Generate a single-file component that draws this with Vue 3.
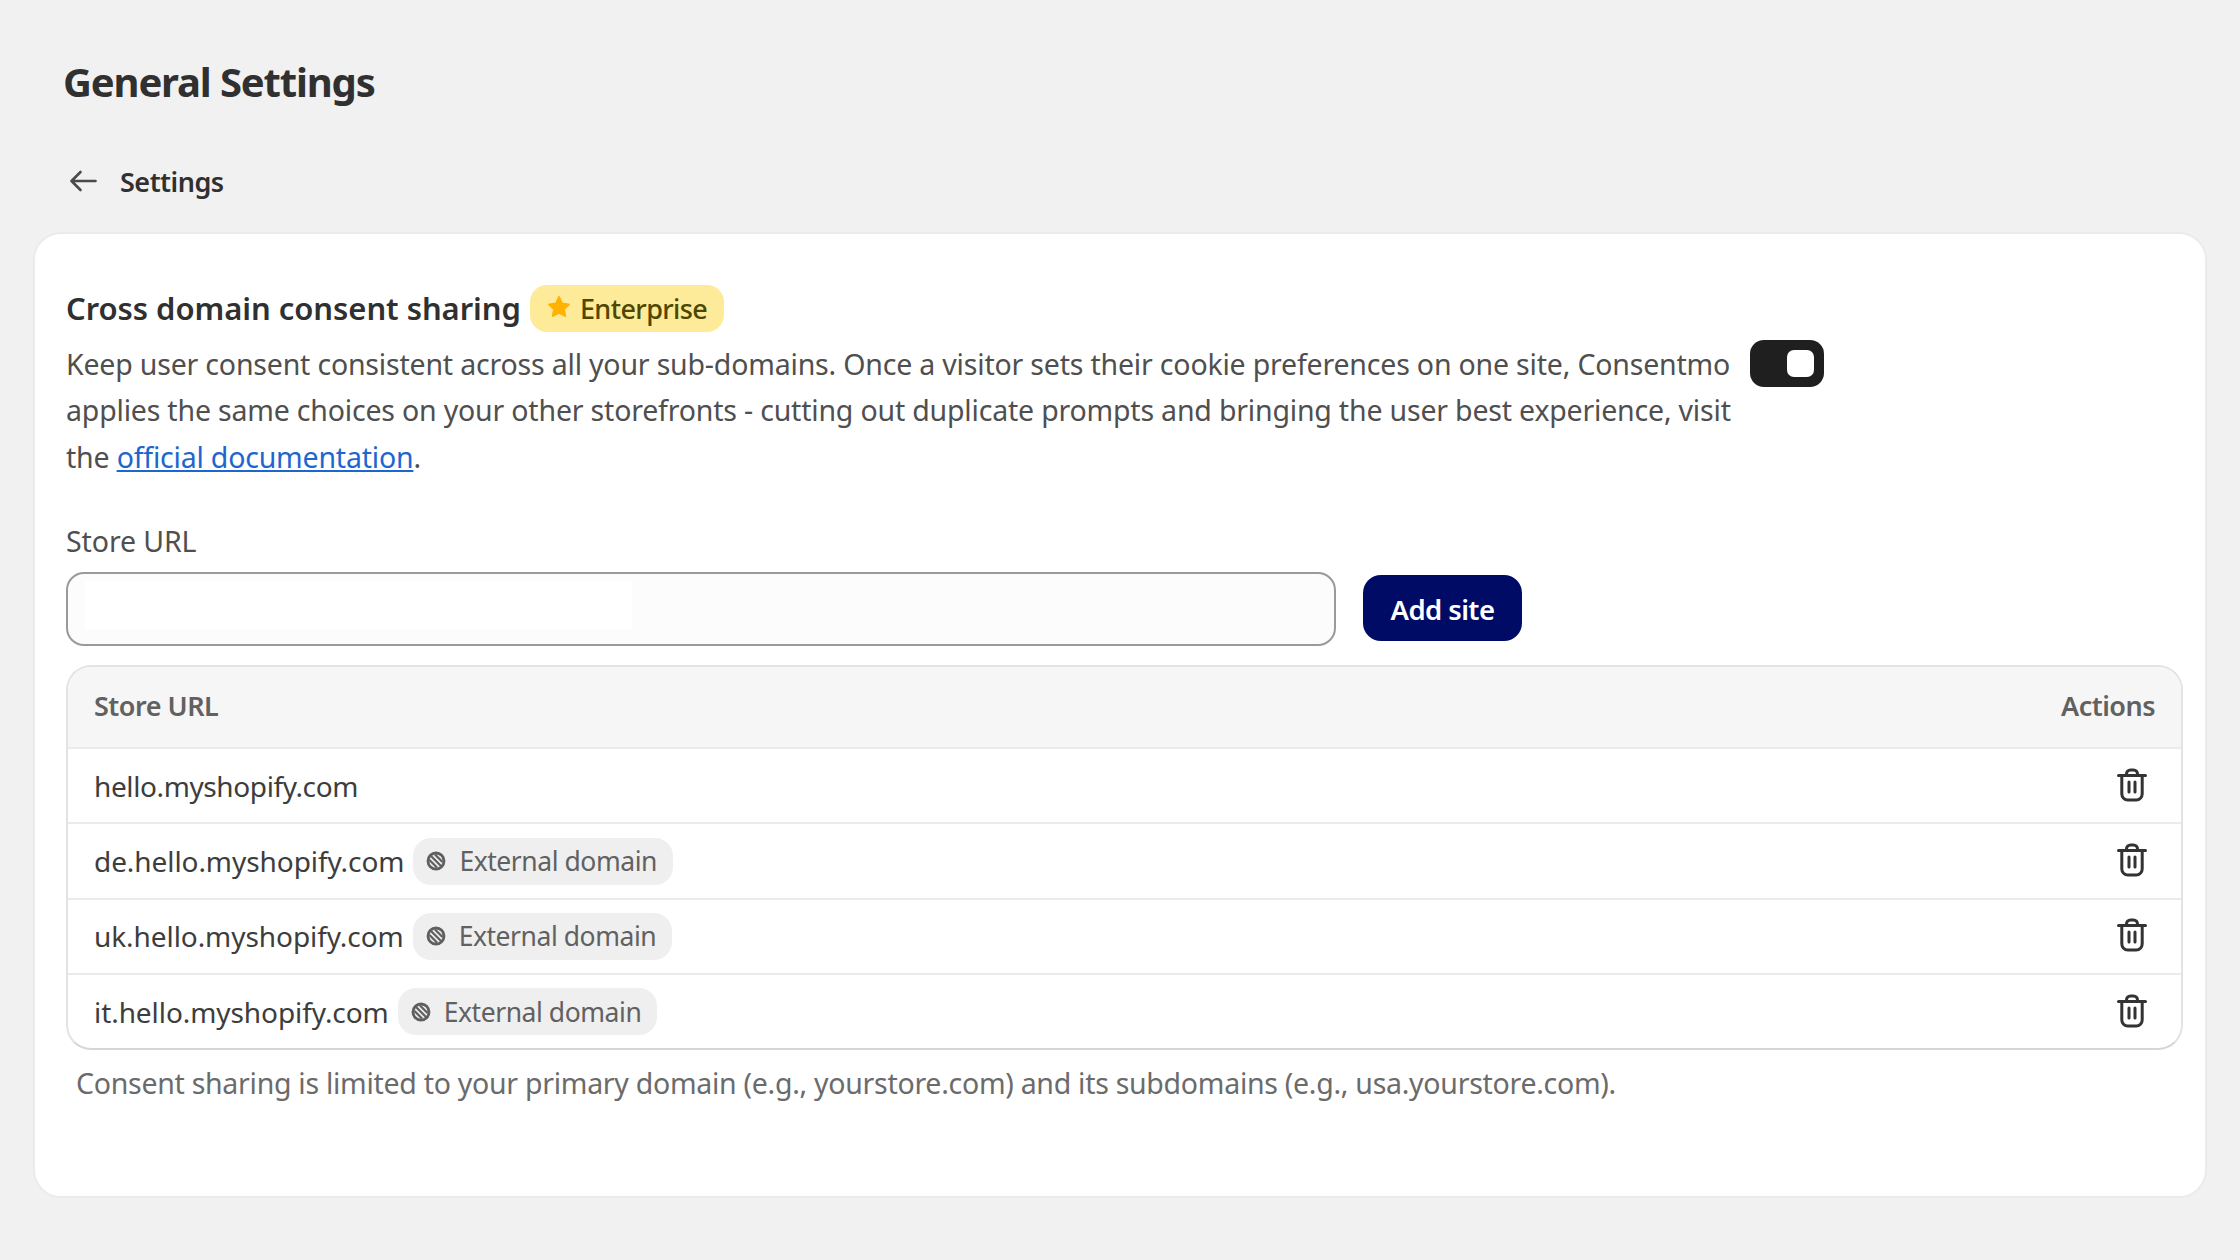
<template>
  <div class="page">
    <h1 class="title">General Settings</h1>
    <div class="back">
      <svg class="arrow" viewBox="0 0 28 22" width="28" height="22"><path d="M26.5 11H2.5M11.5 2l-9 9 9 9" fill="none" stroke="#4a4a4a" stroke-width="2.6" stroke-linecap="round" stroke-linejoin="round"/></svg>
      <span>Settings</span>
    </div>
    <section class="card">
      <div class="head">
        <div class="desc">
          <div class="h2row">
            <h2>Cross domain consent sharing</h2>
            <span class="ent">
              <svg class="star" viewBox="0 0 24 24" width="26" height="26"><path d="M12 3l2.7 5.9 6.3.8-4.6 4.3 1.2 6.2L12 17.2l-5.6 3 1.2-6.2L3 9.7l6.3-.8z" fill="#ffb300" stroke="#ffb300" stroke-width="2" stroke-linejoin="round"/></svg>
              <span>Enterprise</span>
            </span>
          </div>
          <p>Keep user consent consistent across all your sub-domains. Once a visitor sets their cookie preferences on one site, Consentmo applies the same choices on your other storefronts - cutting out duplicate prompts and bringing the user best experience, visit the <a>official documentation</a>.</p>
        </div>
        <div class="toggle"><i></i></div>
      </div>
      <label class="lbl">Store URL</label>
      <div class="addrow">
        <div class="input"><div class="inner"></div></div>
        <button class="add">Add site</button>
      </div>
      <div class="table">
        <div class="row th"><span>Store URL</span><span>Actions</span></div>
        <div v-for="s in sites" :key="s.url" class="row">
          <div class="cell">
            <span :class="{ exturl: s.ext }">{{ s.url }}</span>
            <span v-if="s.ext" class="tag">
              <svg viewBox="0 0 20 20" width="20" height="20"><circle cx="10" cy="10" r="8" fill="#efefef" stroke="#5f5f5f" stroke-width="2.8"/><path d="M4.5 4.5l11 11M9 3.5l7.5 7.5M3.5 9l7.5 7.5" fill="none" stroke="#5f5f5f" stroke-width="2.2"/></svg>
              <span>External domain</span>
            </span>
          </div>
          <svg class="trash" viewBox="0 0 30 34" width="30" height="34"><path d="M1.5 7.5h27M9.5 7.5V6a4 4 0 0 1 4-4h3a4 4 0 0 1 4 4v1.5M4.8 7.5V26a6 6 0 0 0 6 6h8.4a6 6 0 0 0 6-6V7.5M12 14v10M18 14v10" fill="none" stroke="#333" stroke-width="3" stroke-linecap="round"/></svg>
        </div>
      </div>
      <p class="note">Consent sharing is limited to your primary domain (e.g., yourstore.com) and its subdomains (e.g., usa.yourstore.com).</p>
    </section>
  </div>
</template>

<script setup>
const sites = [
  { url: 'hello.myshopify.com', ext: false },
  { url: 'de.hello.myshopify.com', ext: true },
  { url: 'uk.hello.myshopify.com', ext: true },
  { url: 'it.hello.myshopify.com', ext: true }
]
</script>

<style>
html, body { background: #f1f1f1; }
</style>

<style scoped>
.page { width: 2240px; height: 1260px; box-sizing: border-box; background: #f1f1f1; padding: 55px 33px 0; font-family: "Noto Sans", sans-serif; color: #3d3d3d; font-size: 28px; letter-spacing: -0.39px; overflow: hidden; }
.title { margin: 0 0 0 30px; font-size: 40px; line-height: 54px; padding-bottom: 2px; font-weight: 700; color: #303030; letter-spacing: -1.15px; }
.back { display: flex; align-items: center; gap: 23px; margin: 50px 0 0 36px; height: 40px; font-size: 27px; font-weight: 600; color: #303030; letter-spacing: -0.5px; }
.card { margin-top: 31px; height: 966px; box-sizing: border-box; background: #fff; border-radius: 28px; border: 2px solid #ebebeb; padding: 51px 22px 0 31px; }
.head { display: flex; align-items: flex-start; gap: 14px; }
.desc { width: 1670px; }
.h2row { display: flex; align-items: center; gap: 9px; height: 47px; }
h2 { margin: 0; padding-bottom: 2px; font-size: 31px; line-height: 40px; font-weight: 600; color: #303030; letter-spacing: -0.05px; }
.ent { display: inline-flex; align-items: center; gap: 8px; height: 47px; line-height: 40px; padding: 0 17px 0 16px; border-radius: 17px; background: #fdeb9a; font-size: 27px; font-weight: 500; color: #4f4700; letter-spacing: -0.6px; }
.star { margin-top: -4px; }
.desc p { margin: 9px 0 0; line-height: 46.4px; font-size: 28.5px; letter-spacing: -0.19px; color: #4f4f4f; }
a { color: #1d66d0; text-decoration: underline; letter-spacing: -0.2px; }
.toggle { width: 74px; height: 47px; margin-top: 55px; border-radius: 14px; background: #1f1f1f; position: relative; }
.toggle i { position: absolute; right: 10px; top: 10px; width: 27px; height: 27px; border-radius: 7px; background: #fff; }
.lbl { display: block; margin-top: 41px; font-size: 28.5px; letter-spacing: -0.1px; line-height: 40px; color: #4f4f4f; }
.addrow { display: flex; align-items: flex-start; gap: 27px; margin-top: 11px; }
.input { width: 1270px; height: 74px; box-sizing: border-box; border: 2px solid #9a9a9a; border-radius: 18px; background: #fcfcfc; padding: 8px 0 0 17px; }
.inner { width: 547px; height: 48px; background: #fff; }
.add { width: 159px; height: 66px; margin-top: 3px; border: 0; border-radius: 18px; background: #000b66; color: #fff; font: 600 27.5px "Noto Sans", sans-serif; letter-spacing: -0.6px; padding: 2px 0 0; }
.table { margin-top: 19px; border: 2px solid #e3e3e3; border-bottom-color: #d6d6d6; border-radius: 25px; overflow: hidden; }
.row { display: flex; align-items: center; justify-content: space-between; height: 73.25px; padding: 0 26px; border-top: 2px solid #ebebeb; }
.th { height: 76px; padding-bottom: 4px; border-top: 0; background: #f6f6f6; font-weight: 600; color: #616161; font-size: 27px; letter-spacing: -0.5px; }
.cell { display: flex; align-items: center; gap: 9px; }
.exturl { letter-spacing: -0.07px; }
.tag { display: inline-flex; align-items: center; gap: 13px; height: 47px; padding: 0 16px 0 13px; border-radius: 18px; background: #efefef; color: #616161; font-size: 26.5px; letter-spacing: -0.45px; }
.trash { margin: 0 8px 2px 0; }
.note { margin: 12px 0 0 10px; font-size: 28.5px; letter-spacing: -0.28px; line-height: 42px; color: #6b6b6b; }
</style>
